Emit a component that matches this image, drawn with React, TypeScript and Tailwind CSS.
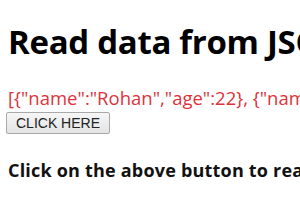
import React from 'react';

export default function App() {
    return (
        <div className="w-[300px] h-[210px] overflow-hidden bg-white px-2 whitespace-nowrap" style={{ fontFamily: '"Open Sans", sans-serif' }}>
            <h1 className="text-[33px] font-bold text-black leading-none pt-[25px] tracking-[-0.3px]">Read data from JSON</h1>
            <p className="text-[18.5px] text-[#dd333b] leading-none mt-[31px]">[{'{'}"name":"Rohan","age":22{'}'}, {'{'}"name":"Ravi","age":25{'}'}]</p>
            <button className="mt-[4px] -ml-[2px] h-[22px] px-[9px] text-[14px] text-[#222] bg-gradient-to-b from-[#f6f6f6] to-[#e4e4e4] border border-[#a9a9a9] rounded-[2px] leading-none" style={{ fontFamily: '"Liberation Sans", sans-serif' }}>CLICK HERE</button>
            <p className="text-[18px] font-bold text-[#111] leading-none mt-[27px] tracking-[0.2px]">Click on the above button to read data</p>
        </div>
    );
}
